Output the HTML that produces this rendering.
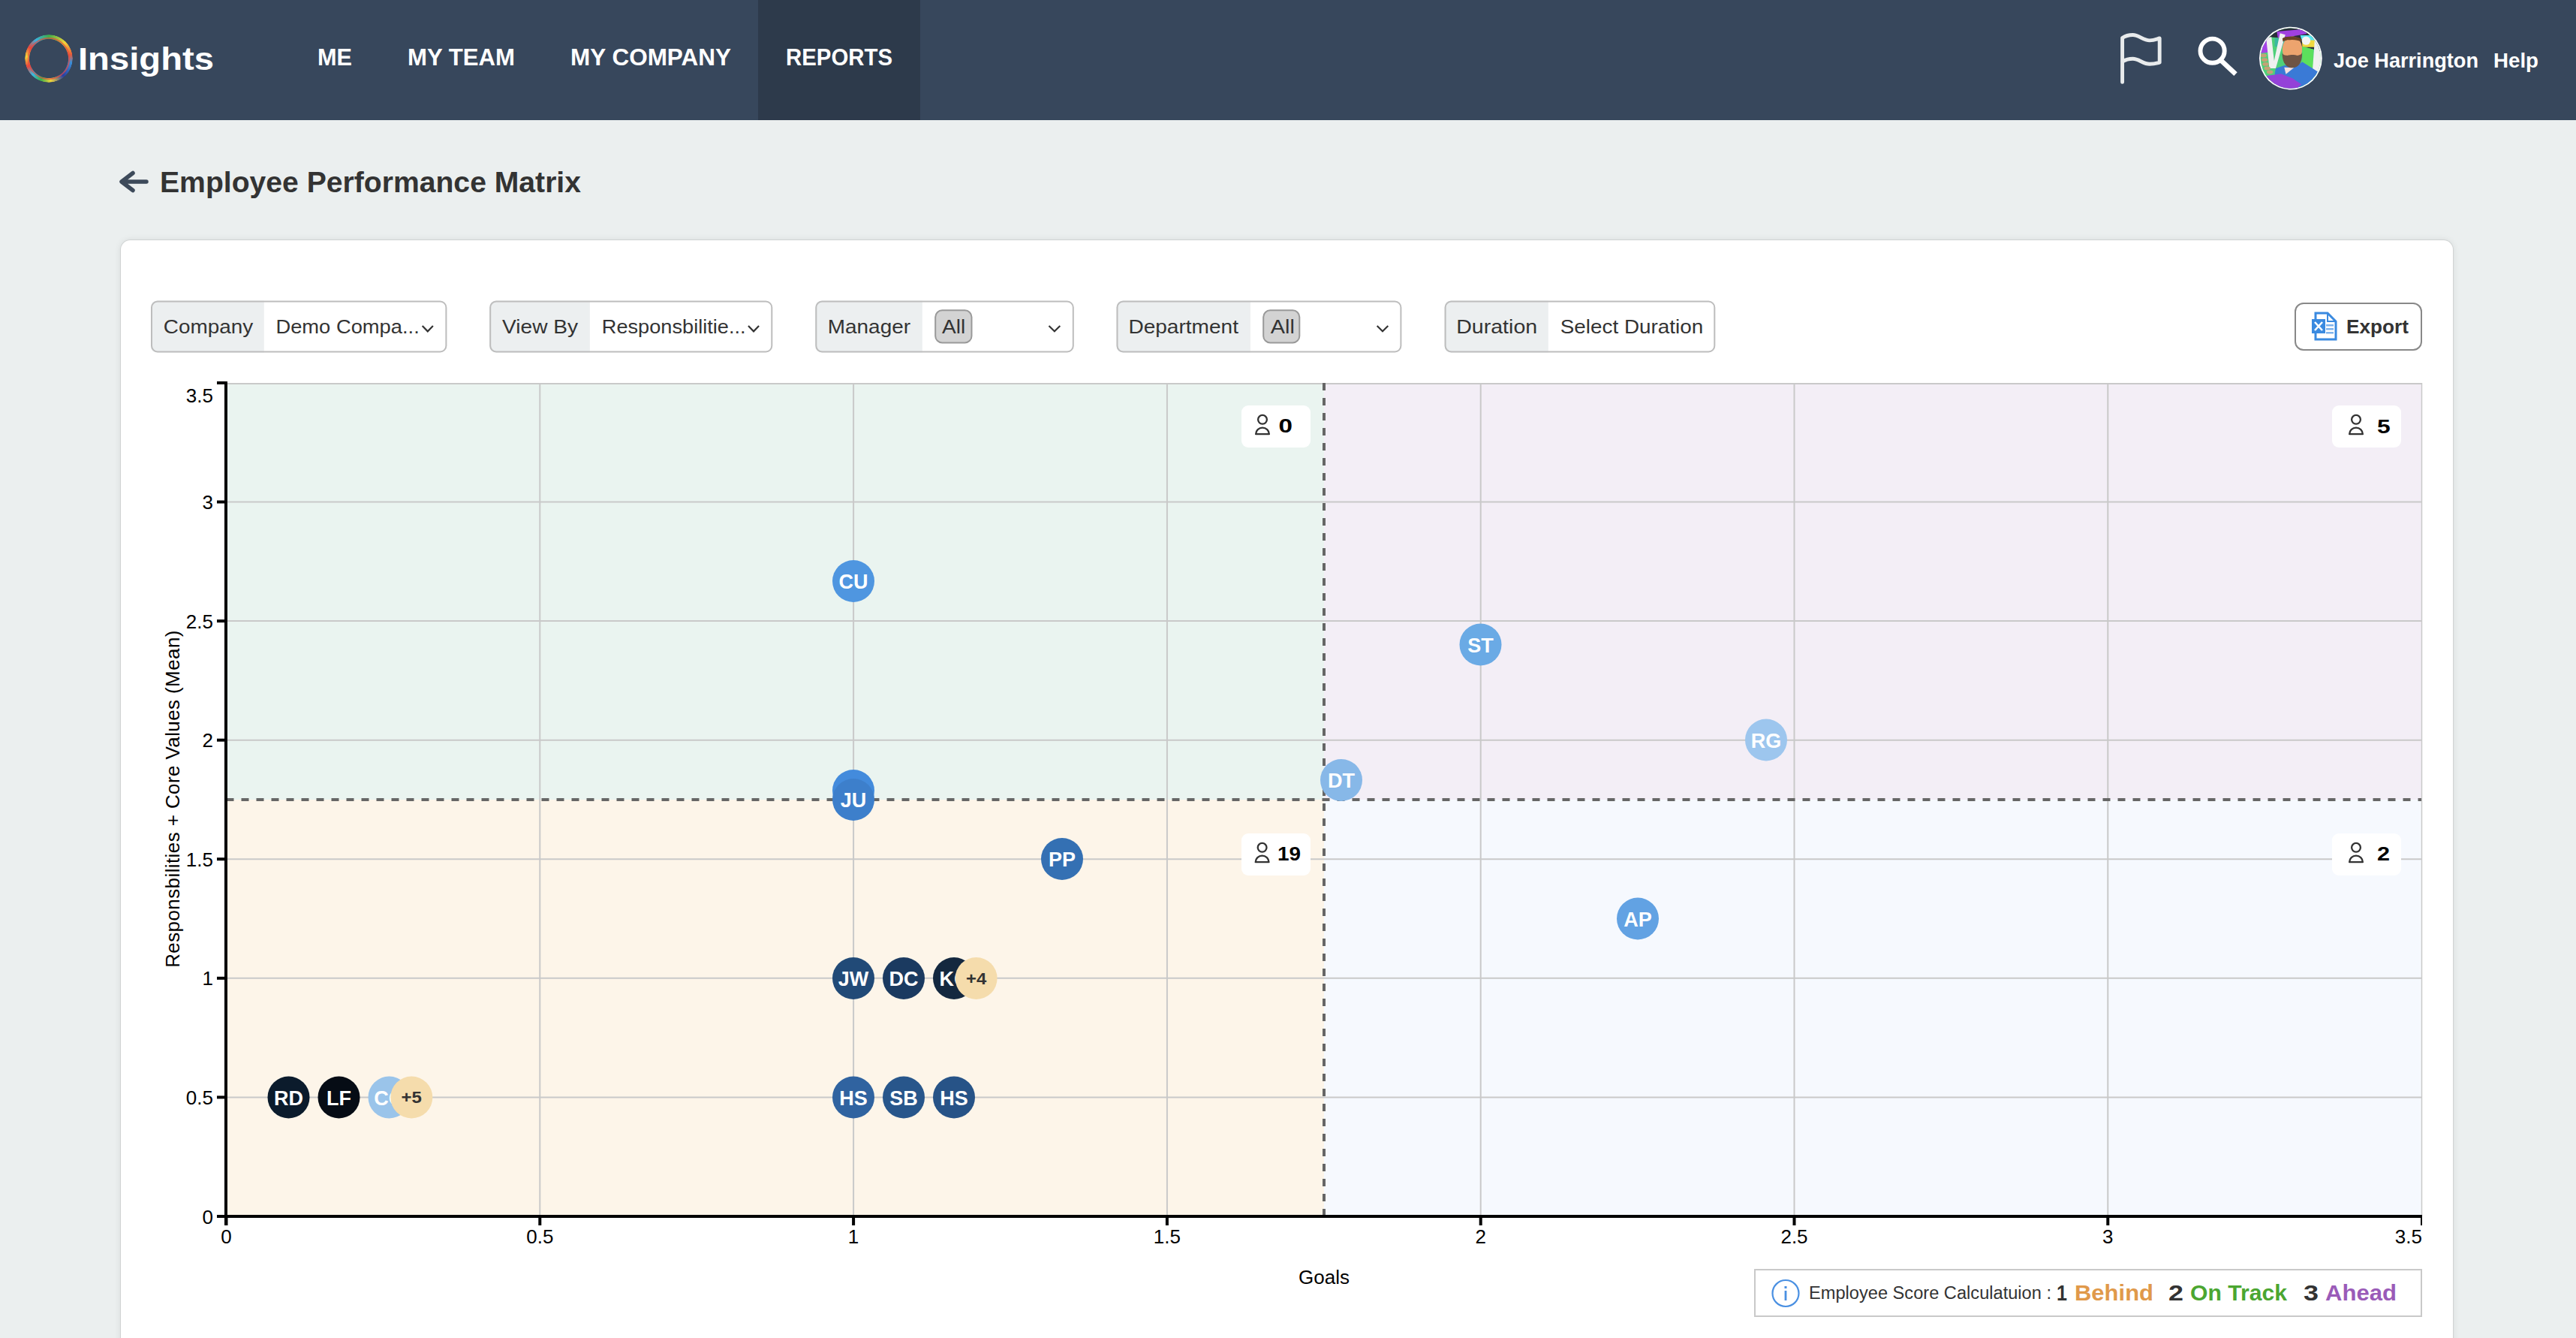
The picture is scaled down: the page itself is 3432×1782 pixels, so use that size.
<!DOCTYPE html>
<html><head><meta charset="utf-8">
<style>
*{margin:0;padding:0;box-sizing:border-box}
html,body{width:3432px;height:1782px;overflow:hidden;background:#ebefef;font-family:"Liberation Sans",sans-serif;position:relative}
.abs{position:absolute;white-space:nowrap}
#hdr{position:absolute;left:0;top:0;width:3432px;height:160px;background:#37475c}
.nav{position:absolute;top:0;height:160px;line-height:160px;color:#fff;font-weight:bold;font-size:32px}
#card{position:absolute;left:160.5px;top:319.5px;width:3107px;height:1600px;background:#fff;border-radius:12.5px;box-shadow:0 0 0 1px rgba(0,0,0,.07),0 0 10px rgba(0,0,0,.10)}
.fbox{position:absolute;top:400px;height:69px;border:2px solid #c4c4c4;border-radius:8px;background:#fff;overflow:hidden}
.flab{position:absolute;left:0;top:0;bottom:0;background:#eceff1;color:#333;font-size:28px;line-height:65px;padding-left:17px}
.fval{position:absolute;top:0;color:#333;font-size:28px;line-height:65px}
.pill{position:absolute;top:10px;height:45px;background:#d2d2d2;border:2px solid #a8a8a8;border-radius:8px;color:#333;font-size:28px;line-height:41px;text-align:center}
</style></head>
<body>
<div id="hdr">
  <div class="abs" style="left:33px;top:46px;width:64px;height:64px;border-radius:50%;background:conic-gradient(from 0deg,#3fae4a,#f2d43a 45deg,#e8593a 80deg,#3a8fd8 100deg,#2a3fa0 140deg,#f2d43a 175deg,#3fae4a 200deg,#3ab8e0 225deg,#e8453c 250deg,#f2d43a 275deg,#e8453c 300deg,#3ab0e0 325deg,#3fae4a 360deg);-webkit-mask:radial-gradient(circle,transparent 25.6px,#000 26.4px,#000 31.4px,transparent 32.2px);mask:radial-gradient(circle,transparent 25.6px,#000 26.4px,#000 31.4px,transparent 32.2px)"></div>
  <svg class="abs" style="left:33px;top:46px" width="64" height="64"><circle cx="32" cy="32" r="27.3" fill="none" stroke="#e8453c" stroke-width="1.6" opacity=".75"/></svg>
    <div style="position:absolute;left:1010px;top:0;width:216px;height:160px;background:#2d3a4b"></div>
          <svg class="abs" style="left:2820px;top:40px" width="70" height="76">
    <path d="M7.6,69.4 V10.5 C12,7.5 16,6.5 21.5,6.5 C30,6.5 35,13.9 44,13.9 C50,13.9 54,11.8 57.2,11 V43.2 C54,44 50,45.3 44,45.3 C35,45.3 30,38.3 21.5,38.3 C16,38.3 12,39.5 7.6,42" fill="none" stroke="#e8ebec" stroke-width="4.9" stroke-linecap="round" stroke-linejoin="round"/>
  </svg>
  <svg class="abs" style="left:2920px;top:42px" width="70" height="64">
    <circle cx="27.6" cy="25.7" r="16.1" fill="none" stroke="#fff" stroke-width="5.9"/>
    <path d="M39.2,38.6 L58.5,56.6" stroke="#fff" stroke-width="6.4"/>
  </svg>
  <svg class="abs" style="left:3005px;top:30px" width="95" height="95" viewBox="0 0 1338 1338">
    <defs><clipPath id="avc"><circle cx="660" cy="670" r="565"/></clipPath></defs>
    <circle cx="660" cy="670" r="590" fill="#fff"/>
    <g clip-path="url(#avc)">
      <rect x="0" y="0" width="1338" height="1338" fill="#4fcf7a"/>
      <path d="M60,100 H1300 V560 L880,450 L560,300 L380,280 L60,260 Z" fill="#2a2f3a"/>
      <path d="M400,170 L940,120 L960,210 L620,270 L420,290 Z" fill="#a040e0"/>
      <path d="M840,240 L1150,240 L1160,340 L870,340 Z" fill="#5ae8f0"/>
      <path d="M870,330 L1120,330 L1110,460 L880,460 Z" fill="#f0d840"/>
      <circle cx="950" cy="340" r="80" fill="#f4f4f4"/>
      <path d="M360,290 L570,300 L510,460 L360,450 Z" fill="#3bb8a0"/>
      <path d="M60,270 L250,260 L240,560 L60,580 Z" fill="#a543e6"/>
      <path d="M880,450 L1080,500 L1080,860 L880,760 Z" fill="#5ce05c"/>
      <path d="M200,290 L300,270 L350,720 L460,200 L560,230 L380,860 L260,860 Z" fill="#f0f0f0"/>
      <path d="M1110,330 L1240,330 L1220,960 L1070,900 Z" fill="#f0f0f0"/>
      <g fill="#c4a276"><ellipse cx="150" cy="620" rx="60" ry="35"/><ellipse cx="170" cy="700" rx="60" ry="35"/><ellipse cx="190" cy="780" rx="60" ry="35"/><ellipse cx="220" cy="860" rx="60" ry="35"/><ellipse cx="270" cy="930" rx="60" ry="35"/></g>
      <path d="M380,860 L560,800 L700,860 L880,740 L1180,930 L900,1260 L460,1200 L360,960 Z" fill="#3a7ad6"/>
      <path d="M540,840 L720,850 L570,970 Z" fill="#f6e0e0"/>
      <ellipse cx="690" cy="500" rx="185" ry="240" fill="#eda46e"/>
      <path d="M505,300 C560,250 820,250 870,320 L860,360 C780,310 600,310 515,360 Z" fill="#6a4226"/>
      <path d="M500,560 C510,620 560,610 600,620 C650,600 740,600 780,620 C830,610 870,600 875,560 C880,760 800,850 690,850 C580,850 500,760 500,560 Z" fill="#6e5444"/>
      <path d="M200,1000 L480,960 L700,1050 L860,1160 L700,1300 L200,1300 Z" fill="#9442d8"/>
    </g>
  </svg>
    </div>
<svg class="abs" style="left:155px;top:222px" width="46" height="40">
  <path d="M40,20 H8 M22,8.5 L7,20 L22,31.5" fill="none" stroke="#3d4a5a" stroke-width="5.5" stroke-linecap="round" stroke-linejoin="round"/>
</svg>
<div id="card"></div>
<svg class="abs" style="left:0;top:0" width="3432" height="520">
<path d="M209,400.5 H351.8 V469.5 H209 A8,8 0 0 1 201,461.5 V408.5 A8,8 0 0 1 209,400.5 Z" fill="#eceff0"/><rect x="202" y="401.5" width="392.4" height="67.0" rx="8" fill="none" stroke="#bdbdbd" stroke-width="2"/>
<path d="M660.2,400.5 H785.9 V469.5 H660.2 A8,8 0 0 1 652.2,461.5 V408.5 A8,8 0 0 1 660.2,400.5 Z" fill="#eceff0"/><rect x="653.2" y="401.5" width="375.0999999999999" height="67.0" rx="8" fill="none" stroke="#bdbdbd" stroke-width="2"/>
<path d="M1094.3,400.5 H1228.8 V469.5 H1094.3 A8,8 0 0 1 1086.3,461.5 V408.5 A8,8 0 0 1 1094.3,400.5 Z" fill="#eceff0"/><rect x="1087.3" y="401.5" width="342.5" height="67.0" rx="8" fill="none" stroke="#bdbdbd" stroke-width="2"/>
<path d="M1495.5,400.5 H1665.9 V469.5 H1495.5 A8,8 0 0 1 1487.5,461.5 V408.5 A8,8 0 0 1 1495.5,400.5 Z" fill="#eceff0"/><rect x="1488.5" y="401.5" width="377.9000000000001" height="67.0" rx="8" fill="none" stroke="#bdbdbd" stroke-width="2"/>
<path d="M1932.6,400.5 H2062.8 V469.5 H1932.6 A8,8 0 0 1 1924.6,461.5 V408.5 A8,8 0 0 1 1932.6,400.5 Z" fill="#eceff0"/><rect x="1925.6" y="401.5" width="358.7000000000003" height="67.0" rx="8" fill="none" stroke="#bdbdbd" stroke-width="2"/>
<rect x="1246.2" y="413.3" width="48.299999999999955" height="43.099999999999966" rx="9" fill="#d3d3d3" stroke="#999" stroke-width="2"/>
<rect x="1683.2" y="413.3" width="48.09999999999991" height="43.099999999999966" rx="9" fill="#d3d3d3" stroke="#999" stroke-width="2"/>
<text x="217.80" y="444.2" font-size="26.5" fill="#333" textLength="119.40" lengthAdjust="spacingAndGlyphs">Company</text>
<text x="367.40" y="444.2" font-size="26.5" fill="#333" textLength="191.40" lengthAdjust="spacingAndGlyphs">Demo Compa...</text>
<text x="669.00" y="444.2" font-size="26.5" fill="#333" textLength="101.20" lengthAdjust="spacingAndGlyphs">View By</text>
<text x="801.80" y="444.2" font-size="26.5" fill="#333" textLength="191.80" lengthAdjust="spacingAndGlyphs">Responsbilitie...</text>
<text x="1102.80" y="444.2" font-size="26.5" fill="#333" textLength="110.20" lengthAdjust="spacingAndGlyphs">Manager</text>
<text x="1255.00" y="444.2" font-size="26.5" fill="#333" textLength="31.20" lengthAdjust="spacingAndGlyphs">All</text>
<text x="1503.40" y="444.2" font-size="26.5" fill="#333" textLength="146.60" lengthAdjust="spacingAndGlyphs">Department</text>
<text x="1692.80" y="444.2" font-size="26.5" fill="#333" textLength="32.00" lengthAdjust="spacingAndGlyphs">All</text>
<text x="1940.20" y="444.2" font-size="26.5" fill="#333" textLength="108.00" lengthAdjust="spacingAndGlyphs">Duration</text>
<text x="2078.80" y="444.2" font-size="26.5" fill="#333" textLength="190.40" lengthAdjust="spacingAndGlyphs">Select Duration</text>
<path d="M562.7,434 L569.8,441.3 L576.9,434" fill="none" stroke="#333" stroke-width="2.2"/>
<path d="M997,434 L1004.05,441.3 L1011.1,434" fill="none" stroke="#333" stroke-width="2.2"/>
<path d="M1397.5,434 L1404.9,441.3 L1412.3,434" fill="none" stroke="#333" stroke-width="2.2"/>
<path d="M1834.7,434 L1842.0,441.3 L1849.3,434" fill="none" stroke="#333" stroke-width="2.2"/>
</svg><div class="abs" style="left:3057px;top:403px;width:170px;height:64px;border:2.5px solid #888;border-radius:12px;background:#fff"></div>
<svg class="abs" style="left:3078px;top:415px" width="38" height="40">
 <path d="M7,2 H23 L34,13 V37 H7 Z" fill="#fff" stroke="#3a8ae0" stroke-width="3"/>
 <path d="M23,2 V13 H34" fill="none" stroke="#3a8ae0" stroke-width="2"/>
 <rect x="21" y="17" width="10" height="2.5" fill="#7fb3ec"/><rect x="21" y="22" width="10" height="2.5" fill="#7fb3ec"/><rect x="21" y="27" width="10" height="2.5" fill="#7fb3ec"/>
 <rect x="2" y="10" width="18" height="19" fill="#3a8ae0"/>
 <path d="M6,14 L16,25 M16,14 L6,25" stroke="#fff" stroke-width="2.6"/>
</svg>

<svg class="abs" style="left:0;top:0" width="3432" height="1782">
<rect x="301.5" y="510" width="1462.5" height="555" fill="#eaf4f0"/>
<rect x="1764" y="510" width="1462" height="555" fill="#f3eef6"/>
<rect x="301.5" y="1065" width="1462.5" height="555.0" fill="#fdf5e9"/>
<rect x="1764" y="1065" width="1462" height="555.0" fill="#f6f9fe"/>
<line x1="719.3" y1="510" x2="719.3" y2="1620" stroke="#c9c9c9" stroke-width="2"/>
<line x1="1137.1" y1="510" x2="1137.1" y2="1620" stroke="#c9c9c9" stroke-width="2"/>
<line x1="1554.9" y1="510" x2="1554.9" y2="1620" stroke="#c9c9c9" stroke-width="2"/>
<line x1="1972.7" y1="510" x2="1972.7" y2="1620" stroke="#c9c9c9" stroke-width="2"/>
<line x1="2390.5" y1="510" x2="2390.5" y2="1620" stroke="#c9c9c9" stroke-width="2"/>
<line x1="2808.3" y1="510" x2="2808.3" y2="1620" stroke="#c9c9c9" stroke-width="2"/>
<line x1="301.5" y1="1461.4" x2="3226" y2="1461.4" stroke="#c9c9c9" stroke-width="2"/>
<line x1="301.5" y1="1302.8" x2="3226" y2="1302.8" stroke="#c9c9c9" stroke-width="2"/>
<line x1="301.5" y1="1144.2" x2="3226" y2="1144.2" stroke="#c9c9c9" stroke-width="2"/>
<line x1="301.5" y1="985.7" x2="3226" y2="985.7" stroke="#c9c9c9" stroke-width="2"/>
<line x1="301.5" y1="827.1" x2="3226" y2="827.1" stroke="#c9c9c9" stroke-width="2"/>
<line x1="301.5" y1="668.5" x2="3226" y2="668.5" stroke="#c9c9c9" stroke-width="2"/>
<line x1="301.5" y1="511" x2="3227" y2="511" stroke="#c9c9c9" stroke-width="2"/>
<line x1="3226.5" y1="510" x2="3226.5" y2="1620" stroke="#c9c9c9" stroke-width="1.5"/>
<line x1="301.5" y1="1065" x2="3226" y2="1065" stroke="#666" stroke-width="4" stroke-dasharray="10 10"/>
<line x1="1764" y1="510" x2="1764" y2="1620" stroke="#666" stroke-width="4" stroke-dasharray="10 10"/>
<line x1="301" y1="508" x2="301" y2="1632" stroke="#000" stroke-width="4"/>
<line x1="289" y1="1620" x2="3227" y2="1620" stroke="#000" stroke-width="4"/>
<line x1="289" y1="1620.0" x2="301" y2="1620.0" stroke="#000" stroke-width="4"/>
<line x1="301.5" y1="1620" x2="301.5" y2="1632" stroke="#000" stroke-width="4"/>
<text x="284" y="1629.5" text-anchor="end" font-size="26" fill="#000">0</text>
<text x="301.5" y="1656" text-anchor="middle" font-size="26" fill="#000">0</text>
<line x1="289" y1="1461.4" x2="301" y2="1461.4" stroke="#000" stroke-width="4"/>
<line x1="719.3" y1="1620" x2="719.3" y2="1632" stroke="#000" stroke-width="4"/>
<text x="284" y="1470.9" text-anchor="end" font-size="26" fill="#000">0.5</text>
<text x="719.3" y="1656" text-anchor="middle" font-size="26" fill="#000">0.5</text>
<line x1="289" y1="1302.8" x2="301" y2="1302.8" stroke="#000" stroke-width="4"/>
<line x1="1137.1" y1="1620" x2="1137.1" y2="1632" stroke="#000" stroke-width="4"/>
<text x="284" y="1312.3" text-anchor="end" font-size="26" fill="#000">1</text>
<text x="1137.1" y="1656" text-anchor="middle" font-size="26" fill="#000">1</text>
<line x1="289" y1="1144.2" x2="301" y2="1144.2" stroke="#000" stroke-width="4"/>
<line x1="1554.9" y1="1620" x2="1554.9" y2="1632" stroke="#000" stroke-width="4"/>
<text x="284" y="1153.7" text-anchor="end" font-size="26" fill="#000">1.5</text>
<text x="1554.9" y="1656" text-anchor="middle" font-size="26" fill="#000">1.5</text>
<line x1="289" y1="985.7" x2="301" y2="985.7" stroke="#000" stroke-width="4"/>
<line x1="1972.7" y1="1620" x2="1972.7" y2="1632" stroke="#000" stroke-width="4"/>
<text x="284" y="995.2" text-anchor="end" font-size="26" fill="#000">2</text>
<text x="1972.7" y="1656" text-anchor="middle" font-size="26" fill="#000">2</text>
<line x1="289" y1="827.1" x2="301" y2="827.1" stroke="#000" stroke-width="4"/>
<line x1="2390.5" y1="1620" x2="2390.5" y2="1632" stroke="#000" stroke-width="4"/>
<text x="284" y="836.6" text-anchor="end" font-size="26" fill="#000">2.5</text>
<text x="2390.5" y="1656" text-anchor="middle" font-size="26" fill="#000">2.5</text>
<line x1="289" y1="668.5" x2="301" y2="668.5" stroke="#000" stroke-width="4"/>
<line x1="2808.3" y1="1620" x2="2808.3" y2="1632" stroke="#000" stroke-width="4"/>
<text x="284" y="678.0" text-anchor="end" font-size="26" fill="#000">3</text>
<text x="2808.3" y="1656" text-anchor="middle" font-size="26" fill="#000">3</text>
<line x1="289" y1="509.9" x2="301" y2="509.9" stroke="#000" stroke-width="4"/>
<line x1="3226" y1="1620" x2="3226" y2="1632" stroke="#000" stroke-width="2"/>
<text x="284" y="536.0" text-anchor="end" font-size="26" fill="#000">3.5</text>
<text x="3227" y="1656" text-anchor="end" font-size="26" fill="#000">3.5</text>
<text x="1764" y="1710" text-anchor="middle" font-size="26" fill="#000">Goals</text>
<text transform="translate(239,1064) rotate(-90)" text-anchor="middle" font-size="26" letter-spacing="0.4" fill="#000">Responsbilities + Core Values (Mean)</text>
<rect x="1654" y="540" width="92" height="56" rx="9" fill="#fff"/><circle cx="1682" cy="558.8" r="5.9" fill="none" stroke="#333" stroke-width="2.3"/><path d="M1673.1,578.2 a8.9,8.6 0 0 1 17.8,0 z" fill="none" stroke="#333" stroke-width="2.3" stroke-linejoin="round"/>
<rect x="3107" y="540" width="92" height="56" rx="9" fill="#fff"/><circle cx="3139" cy="558.8" r="5.9" fill="none" stroke="#333" stroke-width="2.3"/><path d="M3130.1,578.2 a8.9,8.6 0 0 1 17.8,0 z" fill="none" stroke="#333" stroke-width="2.3" stroke-linejoin="round"/>
<rect x="1654" y="1110" width="92" height="56" rx="9" fill="#fff"/><circle cx="1681.6" cy="1128.8" r="5.9" fill="none" stroke="#333" stroke-width="2.3"/><path d="M1672.6999999999998,1148.2 a8.9,8.6 0 0 1 17.8,0 z" fill="none" stroke="#333" stroke-width="2.3" stroke-linejoin="round"/>
<rect x="3107" y="1110" width="92" height="56" rx="9" fill="#fff"/><circle cx="3139" cy="1128.8" r="5.9" fill="none" stroke="#333" stroke-width="2.3"/><path d="M3130.1,1148.2 a8.9,8.6 0 0 1 17.8,0 z" fill="none" stroke="#333" stroke-width="2.3" stroke-linejoin="round"/>
<circle cx="1137" cy="774" r="28" fill="#4f96e0"/><text x="1137" y="784" text-anchor="middle" font-size="27" font-weight="bold" fill="#fff">CU</text>
<circle cx="1137" cy="1053" r="28" fill="#438bdc"/>
<circle cx="1137" cy="1065" r="28" fill="#3d7fcb"/><text x="1137" y="1075" text-anchor="middle" font-size="27" font-weight="bold" fill="#fff">JU</text>
<circle cx="1787" cy="1039" r="28" fill="#87b8e8"/><text x="1787" y="1049" text-anchor="middle" font-size="27" font-weight="bold" fill="#fff">DT</text>
<circle cx="1415" cy="1144" r="28" fill="#3470b3"/><text x="1415" y="1154" text-anchor="middle" font-size="27" font-weight="bold" fill="#fff">PP</text>
<circle cx="1972.5" cy="858.5" r="28" fill="#6aaae5"/><text x="1972.5" y="868.5" text-anchor="middle" font-size="27" font-weight="bold" fill="#fff">ST</text>
<circle cx="2353" cy="985.5" r="28" fill="#9dc6ee"/><text x="2353" y="995.5" text-anchor="middle" font-size="27" font-weight="bold" fill="#fff">RG</text>
<circle cx="2182" cy="1223.5" r="28" fill="#62a2e3"/><text x="2182" y="1233.5" text-anchor="middle" font-size="27" font-weight="bold" fill="#fff">AP</text>
<circle cx="1137" cy="1303" r="28" fill="#214a77"/><text x="1137" y="1313" text-anchor="middle" font-size="27" font-weight="bold" fill="#fff">JW</text>
<circle cx="1204" cy="1303" r="28" fill="#1b3a60"/><text x="1204" y="1313" text-anchor="middle" font-size="27" font-weight="bold" fill="#fff">DC</text>
<circle cx="1271" cy="1303" r="28" fill="#14283f"/><text x="1271" y="1313" text-anchor="middle" font-size="27" font-weight="bold" fill="#fff">KC</text>
<circle cx="1300.6" cy="1303" r="28" fill="#f5dcac"/>
<circle cx="1137" cy="1461.5" r="28" fill="#3063a0"/><text x="1137" y="1471.5" text-anchor="middle" font-size="27" font-weight="bold" fill="#fff">HS</text>
<circle cx="1204" cy="1461.5" r="28" fill="#28568b"/><text x="1204" y="1471.5" text-anchor="middle" font-size="27" font-weight="bold" fill="#fff">SB</text>
<circle cx="1271" cy="1461.5" r="28" fill="#275387"/><text x="1271" y="1471.5" text-anchor="middle" font-size="27" font-weight="bold" fill="#fff">HS</text>
<circle cx="384.5" cy="1461.5" r="28" fill="#0b1b2c"/><text x="384.5" y="1471.5" text-anchor="middle" font-size="27" font-weight="bold" fill="#fff">RD</text>
<circle cx="451.5" cy="1461.5" r="28" fill="#060c15"/><text x="451.5" y="1471.5" text-anchor="middle" font-size="27" font-weight="bold" fill="#fff">LF</text>
<circle cx="518.5" cy="1461.5" r="28" fill="#9ac4ea"/><text x="518.5" y="1471.5" text-anchor="middle" font-size="27" font-weight="bold" fill="#fff">CO</text>
<circle cx="548.3" cy="1461.5" r="28" fill="#f5dcac"/>
</svg>
<div class="abs" style="left:2337px;top:1689.6px;width:890px;height:64.8px;border:2px solid #c9c9c9;background:#fff"></div>
<svg class="abs" style="left:2358.3px;top:1700.5px" width="44" height="44">
  <circle cx="21" cy="21.5" r="17.5" fill="none" stroke="#4a90e2" stroke-width="2.2"/>
  <rect x="19.5" y="12" width="3" height="3" fill="#4a90e2"/>
  <rect x="19.6" y="18" width="2.8" height="13" fill="#4a90e2"/>
</svg>

<svg class="abs" style="left:0;top:0;pointer-events:none" width="3432" height="1782">
<text x="423.00" y="87.1" font-size="30.6" font-weight="bold" fill="#fff" textLength="46.00" lengthAdjust="spacingAndGlyphs">ME</text>
<text x="543.00" y="87.1" font-size="30.6" font-weight="bold" fill="#fff" textLength="143.00" lengthAdjust="spacingAndGlyphs">MY TEAM</text>
<text x="760.00" y="87.1" font-size="30.6" font-weight="bold" fill="#fff" textLength="214.00" lengthAdjust="spacingAndGlyphs">MY COMPANY</text>
<text x="1047.00" y="87.1" font-size="30.6" font-weight="bold" fill="#fff" textLength="142.00" lengthAdjust="spacingAndGlyphs">REPORTS</text>
<text x="104.00" y="93" font-size="43.2" font-weight="bold" fill="#fff" textLength="181.00" lengthAdjust="spacingAndGlyphs">Insights</text>
<text x="3109.00" y="89.9" font-size="27.2" font-weight="bold" fill="#fff" textLength="193.00" lengthAdjust="spacingAndGlyphs">Joe Harrington</text>
<text x="3322.00" y="89.9" font-size="27.2" font-weight="bold" fill="#fff" textLength="60.00" lengthAdjust="spacingAndGlyphs">Help</text>
<text x="213.00" y="256" font-size="38.4" font-weight="bold" fill="#333" textLength="561.00" lengthAdjust="spacingAndGlyphs">Employee Performance Matrix</text>
<text x="3126.00" y="443.9" font-size="25.6" font-weight="bold" fill="#333" textLength="83.00" lengthAdjust="spacingAndGlyphs">Export</text>
<text x="2410.00" y="1730.2" font-size="23" font-weight="normal" fill="#333" textLength="323.00" lengthAdjust="spacingAndGlyphs">Employee Score Calculatuion :</text>
<text x="2740.00" y="1731.9" font-size="29" font-weight="bold" fill="#333" textLength="14.00" lengthAdjust="spacingAndGlyphs">1</text>
<text x="2764.00" y="1731.9" font-size="29" font-weight="bold" fill="#e0994a" textLength="105.00" lengthAdjust="spacingAndGlyphs">Behind</text>
<text x="2889.00" y="1731.9" font-size="29" font-weight="bold" fill="#333" textLength="20.00" lengthAdjust="spacingAndGlyphs">2</text>
<text x="2918.00" y="1731.9" font-size="29" font-weight="bold" fill="#4ba631" textLength="129.00" lengthAdjust="spacingAndGlyphs">On Track</text>
<text x="3069.00" y="1731.9" font-size="29" font-weight="bold" fill="#333" textLength="20.00" lengthAdjust="spacingAndGlyphs">3</text>
<text x="1703.60" y="575.9" font-size="26.5" font-weight="bold" fill="#000" textLength="18.50" lengthAdjust="spacingAndGlyphs">0</text>
<text x="3167.10" y="576.5" font-size="26.5" font-weight="bold" fill="#000" textLength="17.70" lengthAdjust="spacingAndGlyphs">5</text>
<text x="1702.00" y="1145.9" font-size="26.5" font-weight="bold" fill="#000" textLength="31.00" lengthAdjust="spacingAndGlyphs">19</text>
<text x="3167.00" y="1146.3" font-size="26.5" font-weight="bold" fill="#000" textLength="17.00" lengthAdjust="spacingAndGlyphs">2</text>
<text x="1287.00" y="1310.8" font-size="22" font-weight="bold" fill="#333" textLength="27.20" lengthAdjust="spacingAndGlyphs">+4</text>
<text x="534.40" y="1469.3" font-size="22" font-weight="bold" fill="#333" textLength="27.40" lengthAdjust="spacingAndGlyphs">+5</text>
<text x="3098.00" y="1731.9" font-size="29" font-weight="bold" fill="#9a5bb8" textLength="95.00" lengthAdjust="spacingAndGlyphs">Ahead</text>
</svg>
</body></html>
